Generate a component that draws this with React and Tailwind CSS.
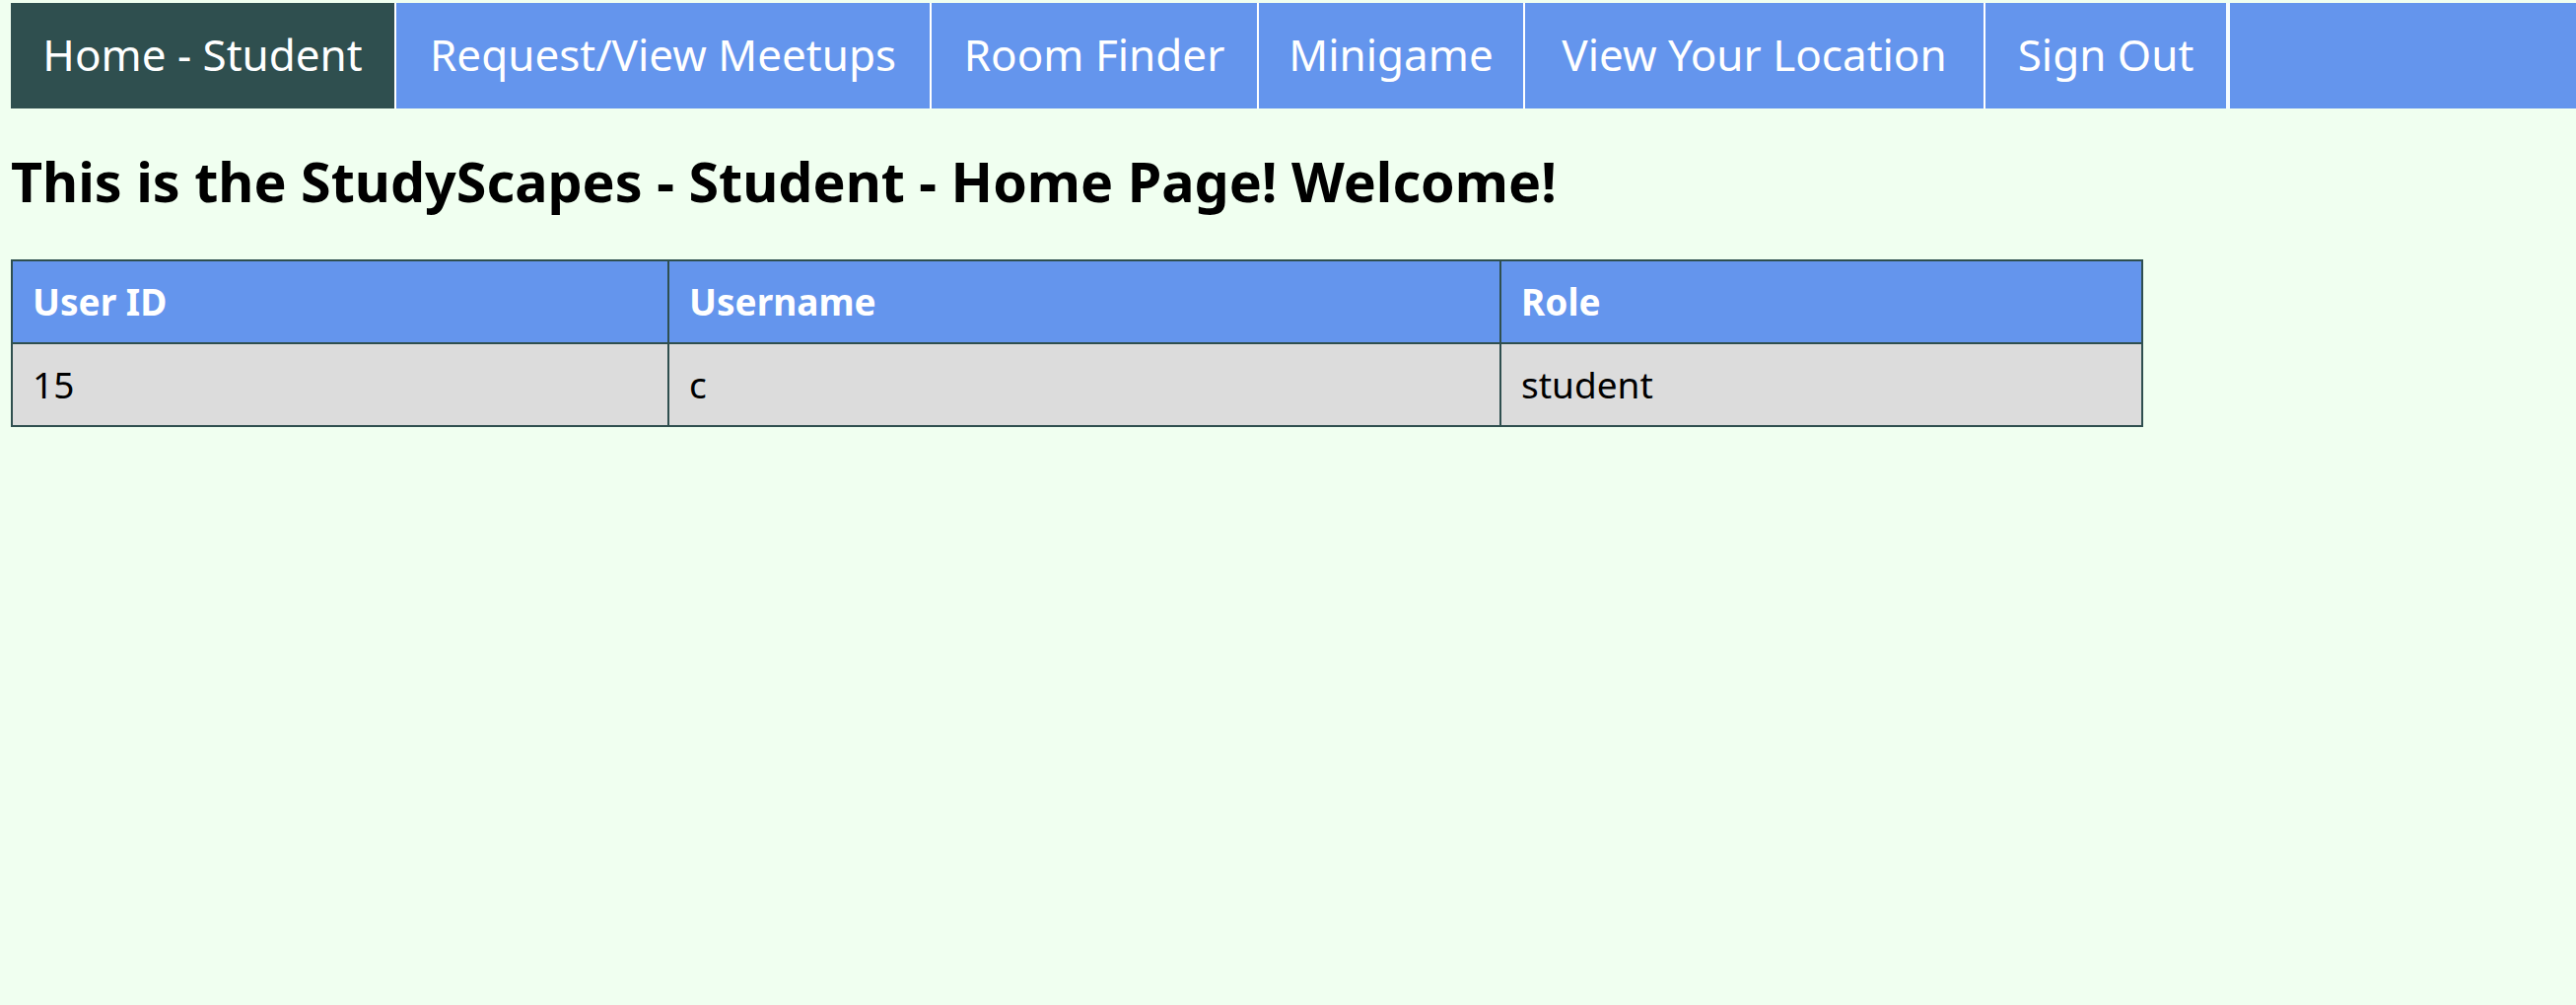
export default function App() {
  const tabs = [
    { t: "Home - Student", w: "w-[391px]", active: true },
    { t: "Request/View Meetups", w: "w-[543px]" },
    { t: "Room Finder", w: "w-[332px]" },
    { t: "Minigame", w: "w-[270px]" },
    { t: "View Your Location", w: "w-[467px]" },
    { t: "Sign Out", w: "w-[248px]", last: true },
  ];
  return (
    <div
      className="min-h-[1019px] w-full bg-[#f0fff0] pl-[11px] pt-[3px] text-black"
      style={{ fontFamily: '"Noto Sans", "Open Sans", sans-serif' }}
    >
      <nav className="flex h-[107px] bg-[#6495ed]">
        {tabs.map((tab) => (
          <a
            key={tab.t}
            className={
              "flex h-full shrink-0 items-center justify-center whitespace-nowrap pb-[3px] text-[44px] leading-[60px] text-white " +
              tab.w +
              (tab.active ? " bg-[#2f4f4f]" : " bg-[#6495ed]") +
              (tab.last ? " border-r-4 border-[#f4fbff]" : " border-r-2 border-white")
            }
          >
            {tab.t}
          </a>
        ))}
      </nav>
      <h2 className="mb-[41px] mt-[36px] text-[55.6px] font-bold leading-[76px]">
        This is the StudyScapes - Student - Home Page! Welcome!
      </h2>
      <table className="w-[2163px] table-fixed border-collapse border-2 border-[#2f4f4f] text-[37px] leading-[50px]">
        <colgroup>
          <col className="w-[666px]" />
          <col className="w-[844px]" />
          <col />
        </colgroup>
        <thead>
          <tr className="bg-[#6495ed] text-white">
            <th className="border-2 border-[#2f4f4f] px-[20px] py-[16px] text-left font-bold">User ID</th>
            <th className="border-2 border-[#2f4f4f] px-[20px] py-[16px] text-left font-bold">Username</th>
            <th className="border-2 border-[#2f4f4f] px-[20px] py-[16px] text-left font-bold">Role</th>
          </tr>
        </thead>
        <tbody>
          <tr className="bg-[#dcdcdc]">
            <td className="border-2 border-[#2f4f4f] px-[20px] py-[16px]">15</td>
            <td className="border-2 border-[#2f4f4f] px-[20px] py-[16px]">c</td>
            <td className="border-2 border-[#2f4f4f] px-[20px] py-[16px]">student</td>
          </tr>
        </tbody>
      </table>
    </div>
  );
}
